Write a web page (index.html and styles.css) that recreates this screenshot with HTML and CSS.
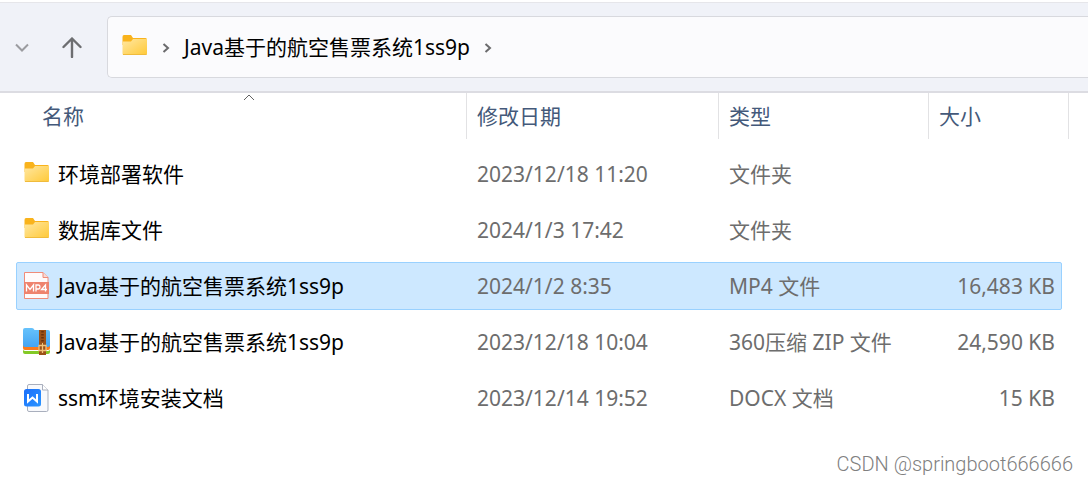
FILE: index.html
```html
<!DOCTYPE html>
<html lang="zh-CN">
<head>
<meta charset="utf-8">
<meta name="viewport" content="width=device-width, initial-scale=1">
<title>Java基于的航空售票系统1ss9p</title>
<link rel="stylesheet" href="styles.css">
</head>
<body>
<svg class="defs" aria-hidden="true">
  <defs>
    <linearGradient id="folder-front" x1="0" y1="0" x2="1" y2="1">
      <stop offset="0" stop-color="#ffe7a2"/><stop offset="1" stop-color="#ffc937"/>
    </linearGradient>
    <linearGradient id="zip-blue" x1="0" y1="0" x2="0" y2="1">
      <stop offset="0" stop-color="#66c2fc"/><stop offset="1" stop-color="#45a5f2"/>
    </linearGradient>
    <linearGradient id="doc-blue" x1="0" y1="0" x2="1" y2="1">
      <stop offset="0" stop-color="#1a6ffb"/><stop offset="1" stop-color="#2b94ff"/>
    </linearGradient>
    <symbol id="folder" viewBox="0 0 28 28">
      <path d="M2.500 4Q2.500 2 4 2H11l2 3H25.500q1.500 0 1.500 1.500V12H2.500z" fill="#f9b31c"/>
      <path d="M2.500 8.500h8.500L13 6h14v14.500q0 1.500-1.500 1.500H4q-1.500 0-1.500-1.500z" fill="url(#folder-front)"/>
      <path d="M3 21.500h23.500" stroke="#f0bb3c" stroke-width="1"/>
    </symbol>
    <symbol id="chevron-right" viewBox="0 0 8 12">
      <path d="M1.500 2L6 6 1.500 10" fill="none" stroke="#6b6b6d" stroke-width="2"/>
    </symbol>
  </defs>
</svg>

<nav class="toolbar" aria-label="导航">
  <button class="nav-button recent" type="button" aria-label="最近浏览的位置">
    <svg width="14" height="9" viewBox="0 0 14 9"><path d="M1 1.500l6 6 6-6" fill="none" stroke="#9b9ca0" stroke-width="2"/></svg>
  </button>
  <button class="nav-button up" type="button" aria-label="上移">
    <svg width="20" height="22" viewBox="0 0 20 22"><path d="M10 21V2.500M1.500 11L10 2.500l8.500 8.500" fill="none" stroke="#6d6e71" stroke-width="2.400" stroke-linecap="round" stroke-linejoin="round"/></svg>
  </button>
  <div class="address">
    <svg class="file-icon"><use href="#folder"/></svg>
    <svg class="chevron"><use href="#chevron-right"/></svg>
    <a class="crumb" href="#files">Java基于的航空售票系统1ss9p</a>
    <svg class="chevron"><use href="#chevron-right"/></svg>
  </div>
</nav>

<main class="content">
  <table class="files" id="files">
    <thead class="head">
      <tr class="head-row">
        <th class="head-cell head-name" scope="col" aria-sort="ascending">名称
          <svg class="sort" width="12" height="7" viewBox="0 0 12 7"><path d="M1 6l5-5 5 5" fill="none" stroke="#626262" stroke-width="1"/></svg>
        </th>
        <th class="head-cell" scope="col">修改日期</th>
        <th class="head-cell" scope="col">类型</th>
        <th class="head-cell" scope="col">大小</th>
      </tr>
    </thead>
    <tbody class="body">
      <tr class="row">
        <td class="name"><svg class="file-icon"><use href="#folder"/></svg>环境部署软件</td>
        <td class="cell">2023/12/18 11:20</td>
        <td class="cell">文件夹</td>
        <td class="cell size"></td>
      </tr>
      <tr class="row">
        <td class="name"><svg class="file-icon"><use href="#folder"/></svg>数据库文件</td>
        <td class="cell">2024/1/3 17:42</td>
        <td class="cell">文件夹</td>
        <td class="cell size"></td>
      </tr>
      <tr class="row selected" aria-selected="true">
        <td class="name">
          <svg class="file-icon" viewBox="0 0 28 28">
            <path d="M2.500.5h18.500l5 5v21H2.500z" fill="#fffafa" stroke="#f08b78"/>
            <path d="M21 .5v5h5" fill="#fbd8d1" stroke="#f08b78"/>
            <path d="M2 10h25v12H2z" fill="#ee836e"/>
            <path d="M4.500 19.500v-6.500l3.500 4.500 3.500-4.500V19.500M14 19.500v-6.500h2.500q1.500 0 1.500 2t-1.500 2h-2.500M23.500 19.500v-6.500l-4 4.500h5.500" fill="none" stroke="#fff" stroke-width="1.300"/>
          </svg>Java基于的航空售票系统1ss9p</td>
        <td class="cell">2024/1/2 8:35</td>
        <td class="cell">MP4 文件</td>
        <td class="cell size">16,483 KB</td>
      </tr>
      <tr class="row">
        <td class="name">
          <svg class="file-icon" viewBox="0 0 28 28">
            <path d="M1 19h27v5q0 2-2 2H3q-2 0-2-2z" fill="#83c926"/>
            <path d="M1 18h27v3q0 2-2 2H3q-2 0-2-2z" fill="#fff"/>
            <path d="M1 16h27v4q0 2-2 2H3q-2 0-2-2z" fill="#fb7a1c"/>
            <path d="M1 2q0-2 2-2h7q1.500 0 2.500 2H26q2 0 2 2v13q0 2-2 2H3q-2 0-2-2z" fill="url(#zip-blue)"/>
            <path d="M17 2h7v25h-7z" fill="#9c5219"/>
            <path d="M20.500 3v14" stroke="#69320e" stroke-width="2.500" stroke-dasharray="1.500 1.500"/>
            <path d="M17 17.500h7v5h-7zM20.500 15v10" fill="none" stroke="#f2c37b" stroke-width="1.300"/>
          </svg>Java基于的航空售票系统1ss9p</td>
        <td class="cell">2023/12/18 10:04</td>
        <td class="cell">360压缩 ZIP 文件</td>
        <td class="cell size">24,590 KB</td>
      </tr>
      <tr class="row">
        <td class="name">
          <svg class="file-icon" viewBox="0 0 28 28">
            <path d="M5.500 2q0-1.500 1.500-1.500h13.500l5.500 5.500v20q0 1.500-1.500 1.500H7q-1.500 0-1.500-1.500z" fill="#f8f9fc" stroke="#a9afbd"/>
            <path d="M20.500.5V6H26" fill="#fff" stroke="#a9afbd"/>
            <rect x="2" y="5" width="17" height="17.500" rx="2.500" fill="url(#doc-blue)"/>
            <path d="M6 10v7.500l4.500-4 4.500 4V10" fill="none" stroke="#fff" stroke-width="2"/>
          </svg>ssm环境安装文档</td>
        <td class="cell">2023/12/14 19:52</td>
        <td class="cell">DOCX 文档</td>
        <td class="cell size">15 KB</td>
      </tr>
    </tbody>
  </table>
</main>
<footer class="watermark">CSDN @springboot666666</footer>
</body>
</html>
```
FILE: styles.css
```css
* {
  box-sizing: border-box;
}

body {
  margin: 0;
  min-height: 100vh;
  display: flex;
  flex-direction: column;
  background: #fff;
  color: #000;
  font: 21px/30px "Noto Sans", "Noto Sans CJK SC", sans-serif;
}

.defs {
  position: absolute;
  width: 0;
  height: 0;
}

.toolbar {
  display: flex;
  align-items: center;
  margin-top: 2px;
  padding: 13px 0;
  border-top: 1px solid #e6e6ea;
  border-bottom: 2px solid #dcdce2;
  background: #f0f2f8;
}

.nav-button {
  display: flex;
  align-items: center;
  justify-content: center;
  padding: 0;
  border: 0;
  background: none;
}

.recent {
  width: 44px;
  height: 40px;
}

.up {
  width: 56px;
  height: 40px;
}

.address {
  flex: 1;
  display: flex;
  align-items: center;
  height: 62px;
  margin-left: 7px;
  padding-left: 12px;
  border: 1px solid #d8d9de;
  border-right: 0;
  border-radius: 5px 0 0 5px;
  background: #fbfbfd;
}

.file-icon {
  flex: none;
  width: 28px;
  height: 28px;
}

.chevron {
  flex: none;
  width: 8px;
  height: 12px;
  margin: 2px 14px 0;
}

.crumb {
  color: inherit;
  text-decoration: none;
  white-space: nowrap;
}

.content {
  flex: 1;
  padding: 0 19px 0 16px;
}

.files,
.head,
.body {
  display: block;
}

.head-row,
.row {
  display: grid;
  grid-template-columns: minmax(0, 1fr) 252px 210px 140px;
}

.head-cell {
  padding: 8px 10px;
  border-right: 1px solid #e2e2e4;
  color: #44597a;
  font-weight: 400;
  text-align: left;
}

.head-name {
  position: relative;
  margin-left: 16px;
}

.sort {
  position: absolute;
  top: 1px;
  left: calc(50% - 6px);
}

.body {
  display: grid;
  gap: 8px;
  margin: 11px 7px 0 0;
}

.row {
  grid-template-columns: minmax(0, 1fr) 252px 210px 132px;
  border: 1px solid transparent;
  border-radius: 2px;
}

.selected {
  border-color: #99d1ff;
  background: #cde8ff;
}

.name,
.cell {
  padding: 8px 10px;
  white-space: nowrap;
}

.name {
  display: flex;
  align-items: center;
  gap: 8px;
  padding: 8px 5px;
}

.cell {
  color: #6d6d6d;
}

.size {
  padding-right: 6px;
  text-align: right;
}

.watermark {
  padding: 0 15px 5px;
  color: #808080;
  font: 300 20px/30px Roboto, sans-serif;
  text-align: right;
}
```
